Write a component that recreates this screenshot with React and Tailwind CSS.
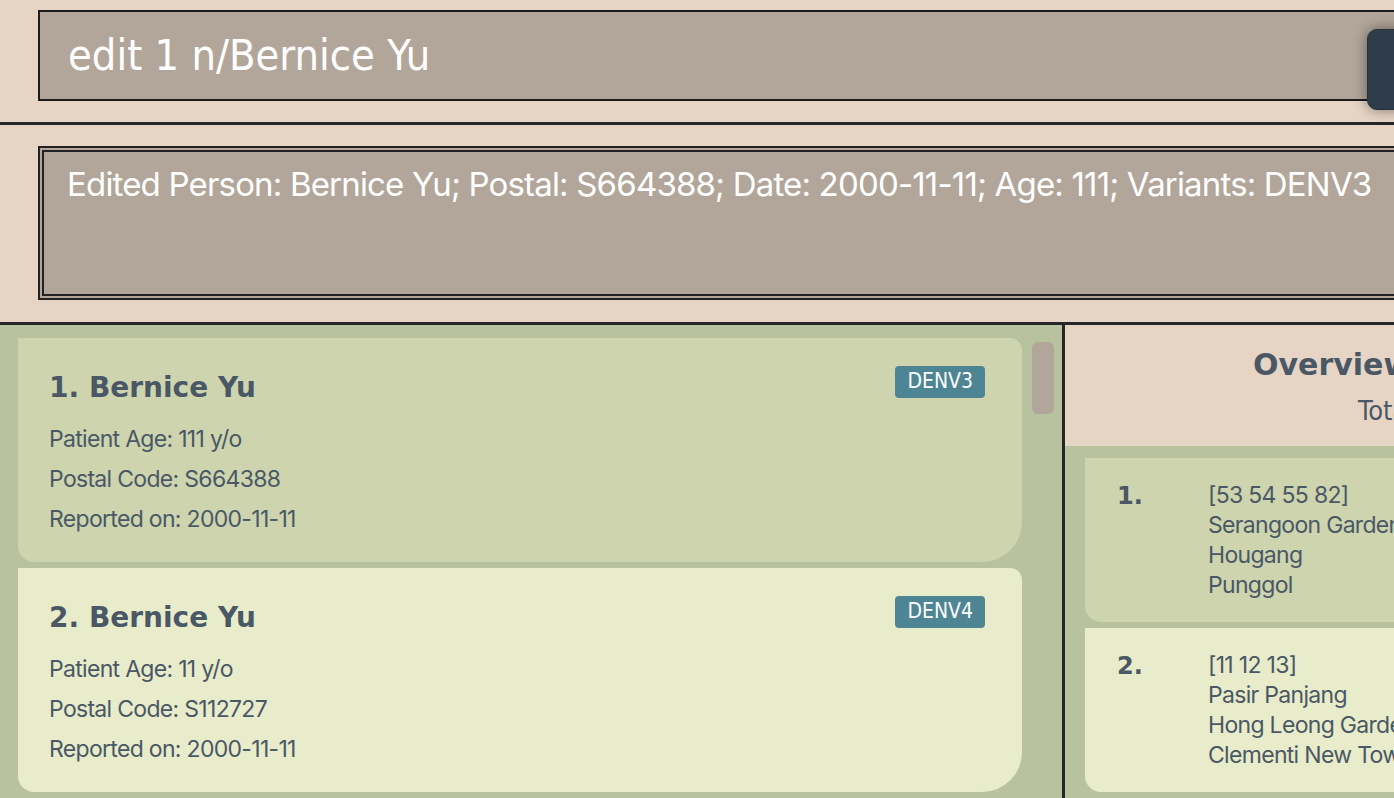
import React from 'react';

const persons = [
  { id: 1, name: 'Bernice Yu', age: 111, postal: 'S664388', date: '2000-11-11', variant: 'DENV3', tone: 'bg-[#cdd4ae]' },
  { id: 2, name: 'Bernice Yu', age: 11, postal: 'S112727', date: '2000-11-11', variant: 'DENV4', tone: 'bg-[#e8ecca]' },
];

const clusters = [
  { id: 1, ids: '[53 54 55 82]', places: ['Serangoon Gardens', 'Hougang', 'Punggol'], tone: 'bg-[#cdd4ae]' },
  { id: 2, ids: '[11 12 13]', places: ['Pasir Panjang', 'Hong Leong Garden', 'Clementi New Town'], tone: 'bg-[#e8ecca]' },
];

const PersonCard = ({ person }) => (
  <div className={`${person.tone} h-[224px] pt-[28px] pl-[31px] pr-[37px] rounded-tr-[12px] rounded-br-[40px] rounded-bl-[16px]`}>
    <div className="flex items-start justify-between">
      <h2 className="mt-[8px] text-[28px] leading-[27px] font-bold text-[#4a5866] font-['DejaVu_Sans',sans-serif]">
        {person.id}. {person.name}
      </h2>
      <span className="h-[32px] px-[12px] flex items-center rounded-[4px] bg-[#4e8595] text-white text-[21px] font-['DejaVu_Sans_Condensed','DejaVu_Sans',sans-serif]">
        {person.variant}
      </span>
    </div>
    <div className="mt-[18px] text-[23px] leading-[40px] tracking-[-0.03em] text-[#4a5866] font-['Inter',sans-serif]">
      <p>Patient Age: {person.age} y/o</p>
      <p>Postal Code: {person.postal}</p>
      <p>Reported on: {person.date}</p>
    </div>
  </div>
);

const ClusterCard = ({ cluster }) => (
  <div className={`${cluster.tone} h-[164px] flex pl-[32px] pt-[22px] rounded-bl-[16px] rounded-tr-[12px]`}>
    <span className="w-[91px] mt-[1px] text-[24px] leading-[30px] font-bold text-[#4a5866] font-['DejaVu_Sans',sans-serif]">
      {cluster.id}.
    </span>
    <div className="text-[23px] leading-[30px] tracking-[-0.03em] text-[#4a5866] font-['Inter',sans-serif]">
      <p>{cluster.ids}</p>
      {cluster.places.map((p) => (
        <p key={p}>{p}</p>
      ))}
    </div>
  </div>
);

const App = () => {
  return (
    <div className="w-screen h-screen overflow-hidden bg-[#e6d5c5]">
      <div className="w-[1700px]">
        {/* Command box */}
        <div className="relative h-[122px] pt-[10px] pl-[38px]">
          <div className="h-[91px] border-2 border-[#1c1c1c] bg-[#b2a69a] flex items-center pl-[28px]">
            <span className="text-[43px] text-white font-['DejaVu_Sans_Condensed','DejaVu_Sans',sans-serif]">
              edit 1 n/Bernice Yu
            </span>
          </div>
          <button className="absolute left-[1367px] top-[29px] w-[120px] h-[81px] rounded-[10px] bg-[#2f3d4a] border border-[#27313b] shadow-[0_0_14px_rgba(0,0,0,0.45)]" />
        </div>
        <div className="h-[3px] bg-[#262626]" />

        {/* Result display */}
        <div className="h-[197px] pt-[21px] pl-[38px]">
          <div className="h-[154px] border-[6px] border-double border-[#222] bg-[#b2a69a] pl-[23px] pt-[12px]">
            <p className="text-[33px] leading-[40px] tracking-[-0.025em] text-white font-['Inter',sans-serif]">
              Edited Person: Bernice Yu; Postal: S664388; Date: 2000-11-11; Age: 111; Variants: DENV3
            </p>
          </div>
        </div>
        <div className="h-[3px] bg-[#262626]" />

        {/* Main area */}
        <div className="flex h-[480px]">
          <div className="w-[1062px] bg-[#b9c29e] flex pl-[18px] pt-[13px]">
            <div className="w-[1004px] flex flex-col gap-[6px]">
              {persons.map((p) => (
                <PersonCard key={p.id} person={p} />
              ))}
            </div>
            <div className="ml-[10px] mt-[4px] w-[22px] h-[72px] rounded-[6px] bg-[#b2a69a]" />
          </div>
          <div className="w-[3px] bg-[#262626]" />
          <div className="flex-1 flex flex-col">
            <div className="h-[121px] bg-[#e6d5c5] pt-[22px]">
              <h2 className="pl-[188px] text-[30px] leading-[36px] font-bold text-[#4a5866] font-['DejaVu_Sans',sans-serif]">
                Overview
              </h2>
              <p className="mt-[12px] pl-[293px] text-[27px] leading-[32px] text-[#4a5866] font-['DejaVu_Sans_Condensed','DejaVu_Sans',sans-serif]">
                Total Clusters: 2
              </p>
            </div>
            <div className="flex-1 bg-[#b9c29e] pl-[20px] pt-[12px] flex flex-col gap-[6px]">
              {clusters.map((c) => (
                <ClusterCard key={c.id} cluster={c} />
              ))}
            </div>
          </div>
        </div>
      </div>
    </div>
  );
};

export default App;
